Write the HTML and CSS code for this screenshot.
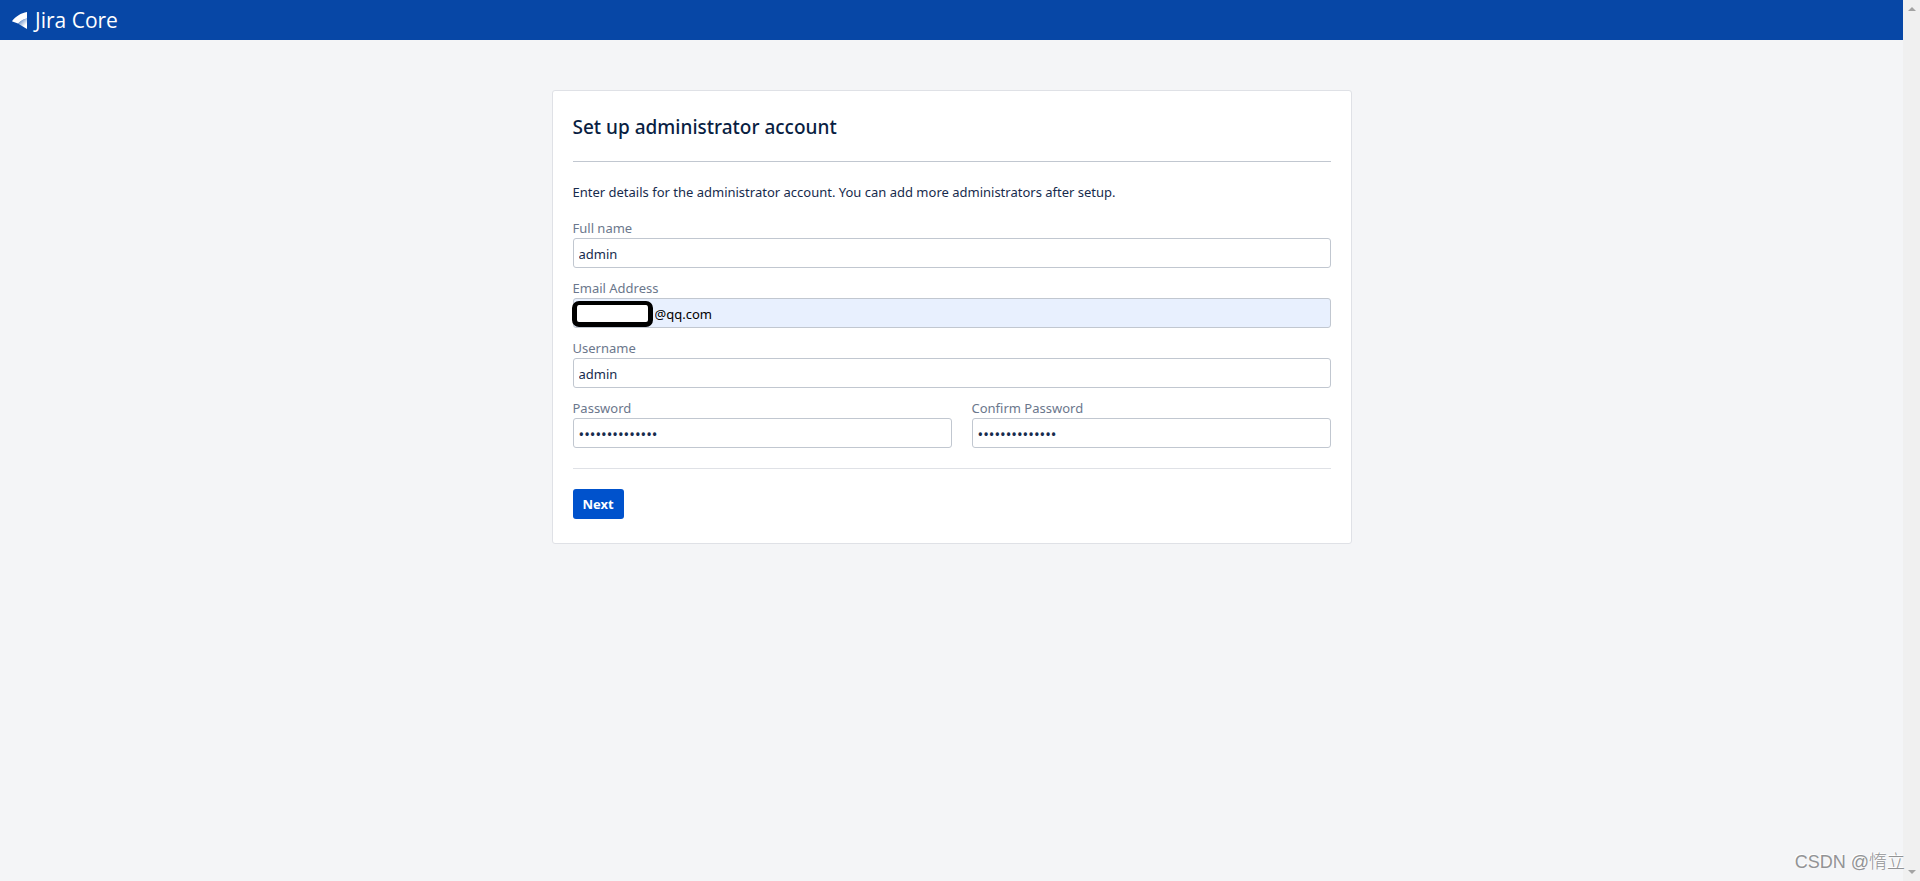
FILE: index.html
```html
<!DOCTYPE html>
<html lang="en">
<head>
<meta charset="utf-8">
<title>Set up administrator account</title>
<link rel="stylesheet" href="styles.css">
</head>
<body>
  <div class="page">
    <header class="header">
      <a class="logo" href="#">
        <svg class="logo-mark" viewBox="0 0 15 17" aria-hidden="true">
          <defs>
            <linearGradient id="fold" x1="0.2" y1="0.2" x2="0.8" y2="0.9">
              <stop offset="0" stop-color="#fff" stop-opacity="0.4"/>
              <stop offset="0.8" stop-color="#fff"/>
            </linearGradient>
          </defs>
          <path fill="#fff" d="M15 0v6.500C12 7 9 8.500 6 11.500L.4 9.600C0 9.400 0 9 .3 8.700 3.500 4.600 9 1 15 0z"/>
          <path fill="url(#fold)" d="M15 6.500V17L7.500 12.500 6 11.500C9 8.500 12 7 15 6.500z"/>
        </svg>
        <span>Jira Core</span>
      </a>
    </header>

    <main class="panel">
      <h1>Set up administrator account</h1>
      <form class="setup-form">
        <p>Enter details for the administrator account. You can add more administrators after setup.</p>
        <div class="field">
          <label for="fullname">Full name</label>
          <input type="text" id="fullname" value="admin">
        </div>
        <div class="field">
          <label for="email">Email Address</label>
          <div class="email-box">
            <input type="text" id="email" class="autofilled" value="@qq.com">
            <span class="mask"></span>
          </div>
        </div>
        <div class="field">
          <label for="username">Username</label>
          <input type="text" id="username" value="admin">
        </div>
        <div class="field-row">
          <div class="field">
            <label for="password">Password</label>
            <input type="password" id="password" value="12345678901234">
          </div>
          <div class="field">
            <label for="confirm">Confirm Password</label>
            <input type="password" id="confirm" value="12345678901234">
          </div>
        </div>
        <div class="buttons">
          <button type="button">Next</button>
        </div>
      </form>
    </main>
  </div>

  <div class="scrollbar" aria-hidden="true">
    <svg viewBox="0 0 8 4"><path d="M4 0l4 4H0z"/></svg>
    <svg viewBox="0 0 8 4"><path d="M0 0h8L4 4z"/></svg>
  </div>
  <div class="watermark">CSDN @惰立</div>
</body>
</html>
```
FILE: styles.css
```css
* {
  box-sizing: border-box;
}
body {
  display: flex;
  min-height: 100vh;
  margin: 0;
  background: #f4f5f7;
  color: #172b4d;
  font-family: "Noto Sans", "Noto Sans CJK SC", sans-serif;
  font-size: 13px;
  line-height: 20px;
}

/* header */
.page {
  flex: 1;
}
.header {
  display: flex;
  align-items: center;
  height: 40px;
  padding: 0 12px;
  background: #0747a6;
}
.logo {
  display: flex;
  align-items: center;
  gap: 8px;
  color: #fff;
  font-family: "Open Sans", sans-serif;
  font-size: 21px;
  text-decoration: none;
}
.logo-mark {
  width: 15px;
  height: 17px;
}

/* setup panel */
.panel {
  max-width: 800px;
  margin: 50px auto;
  padding: 20px;
  padding-bottom: 24px;
  background: #fff;
  border: 1px solid #dfe1e6;
  border-radius: 3px;
}
h1 {
  margin: 0;
  padding: 4px 0 22px;
  border-bottom: 1px solid #c1c7d0;
  color: #091e42;
  font-size: 19px;
  font-weight: 500;
  line-height: 24px;
}
p {
  margin: 20px 0 17px;
}
.field {
  margin-bottom: 11px;
}
label {
  display: block;
  color: #6b778c;
  line-height: 19px;
}
input {
  display: block;
  width: 100%;
  height: 30px;
  padding: 5px 5px 3px;
  border: 1px solid #c1c7d0;
  border-radius: 3px;
  background: #fff;
  color: #172b4d;
  font: inherit;
}
input[type="password"] {
  font-size: 15px;
}
.field-row {
  display: grid;
  grid-template-columns: 1fr calc(50% - 20px);
  gap: 20px;
}
.email-box {
  position: relative;
}
.email-box .autofilled {
  padding-left: 81px;
  background: #e8f0fe;
  color: #000;
}
.mask {
  position: absolute;
  top: 3px;
  left: -1px;
  width: 81px;
  height: 26px;
  border: 5px solid #000;
  border-top-width: 4px;
  border-radius: 7px;
  background: #fff;
}
.buttons {
  margin-top: 9px;
  padding-top: 20px;
  border-top: 1px solid #dfe1e6;
}
button {
  height: 30px;
  padding: 0 10px;
  border: 0;
  border-radius: 3px;
  background: #0052cc;
  color: #fff;
  font: inherit;
  font-weight: 700;
}

/* window edge */
.scrollbar {
  display: flex;
  flex-direction: column;
  align-items: center;
  justify-content: space-between;
  width: 17px;
  padding: 7px 0;
  background: #f0f0f0;
}
.scrollbar svg {
  width: 8px;
  height: 4px;
  fill: #a3a3a3;
}
.watermark {
  position: absolute;
  right: 15px;
  bottom: 6px;
  color: #929395;
  font-family: "Liberation Sans", "Noto Sans CJK SC", sans-serif;
  font-size: 18px;
  font-weight: 300;
  line-height: 26px;
  text-shadow: -1px -1px 0 #fff;
}
```
